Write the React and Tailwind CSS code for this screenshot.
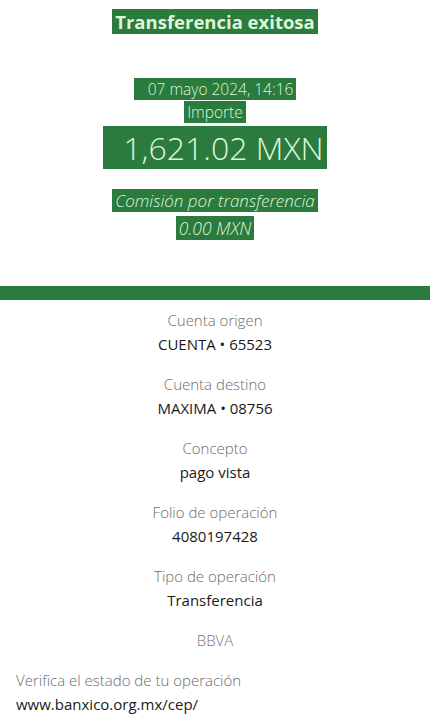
import React from 'react';

const rows = [
  { label: 'Cuenta origen', value: 'CUENTA • 65523' },
  { label: 'Cuenta destino', value: 'MAXIMA • 08756' },
  { label: 'Concepto', value: 'pago vista' },
  { label: 'Folio de operación', value: '4080197428' },
  { label: 'Tipo de operación', value: 'Transferencia' },
];

function Mark({ children, className = '' }) {
  return (
    <span className={`bg-[#2b7a3e] text-[#dcf7d8] px-[3px] ${className}`}>{children}</span>
  );
}

export default function App() {
  return (
    <div className="w-[430px] h-[725px] bg-white overflow-hidden font-['Open_Sans',sans-serif]">
      {/* encabezado */}
      <div className="flex flex-col items-center pt-[10px]">
        <div className="text-[18.5px] font-bold leading-[24px]">
          <Mark>Transferencia exitosa</Mark>
        </div>
        <div className="mt-[43px] text-[15.5px] font-light leading-[24px]">
          <Mark className="pl-[14px] pr-[3px]">07 mayo 2024, 14:16</Mark>
        </div>
        <div className="text-[15.5px] font-light leading-[22px]">
          <Mark>Importe</Mark>
        </div>
        <div className="mt-[5px] text-[32px] font-light leading-[40px]">
          <Mark className="pl-[20px]">1,621.02 MXN</Mark>
        </div>
        <div className="mt-[21px] text-[17px] font-light italic leading-[24px]">
          <Mark>Comisión por transferencia</Mark>
        </div>
        <div className="mt-[2px] text-[17.5px] font-light italic leading-[26px]">
          <Mark>0.00 MXN</Mark>
        </div>
      </div>

      <div className="mt-[45px] h-[14px] bg-[#2b7a3e]" />

      {/* detalle */}
      <div className="flex flex-col items-center pt-[8px] gap-[16px]">
        {rows.map((r) => (
          <div key={r.label} className="flex flex-col items-center">
            <div className="text-[15px] font-light text-[#6b6b6b] leading-[24px]">{r.label}</div>
            <div className="text-[15px] text-[#1a1a1a] leading-[24px]">{r.value}</div>
          </div>
        ))}
        <div className="text-[15px] font-light text-[#777] leading-[24px]">BBVA</div>
      </div>

      <div className="mt-[16px] px-[16px]">
        <div className="text-[15px] font-light text-[#6b6b6b] leading-[24px]">Verifica el estado de tu operación</div>
        <div className="text-[15px] text-[#1a1a1a] leading-[24px]">www.banxico.org.mx/cep/</div>
      </div>
    </div>
  );
}
